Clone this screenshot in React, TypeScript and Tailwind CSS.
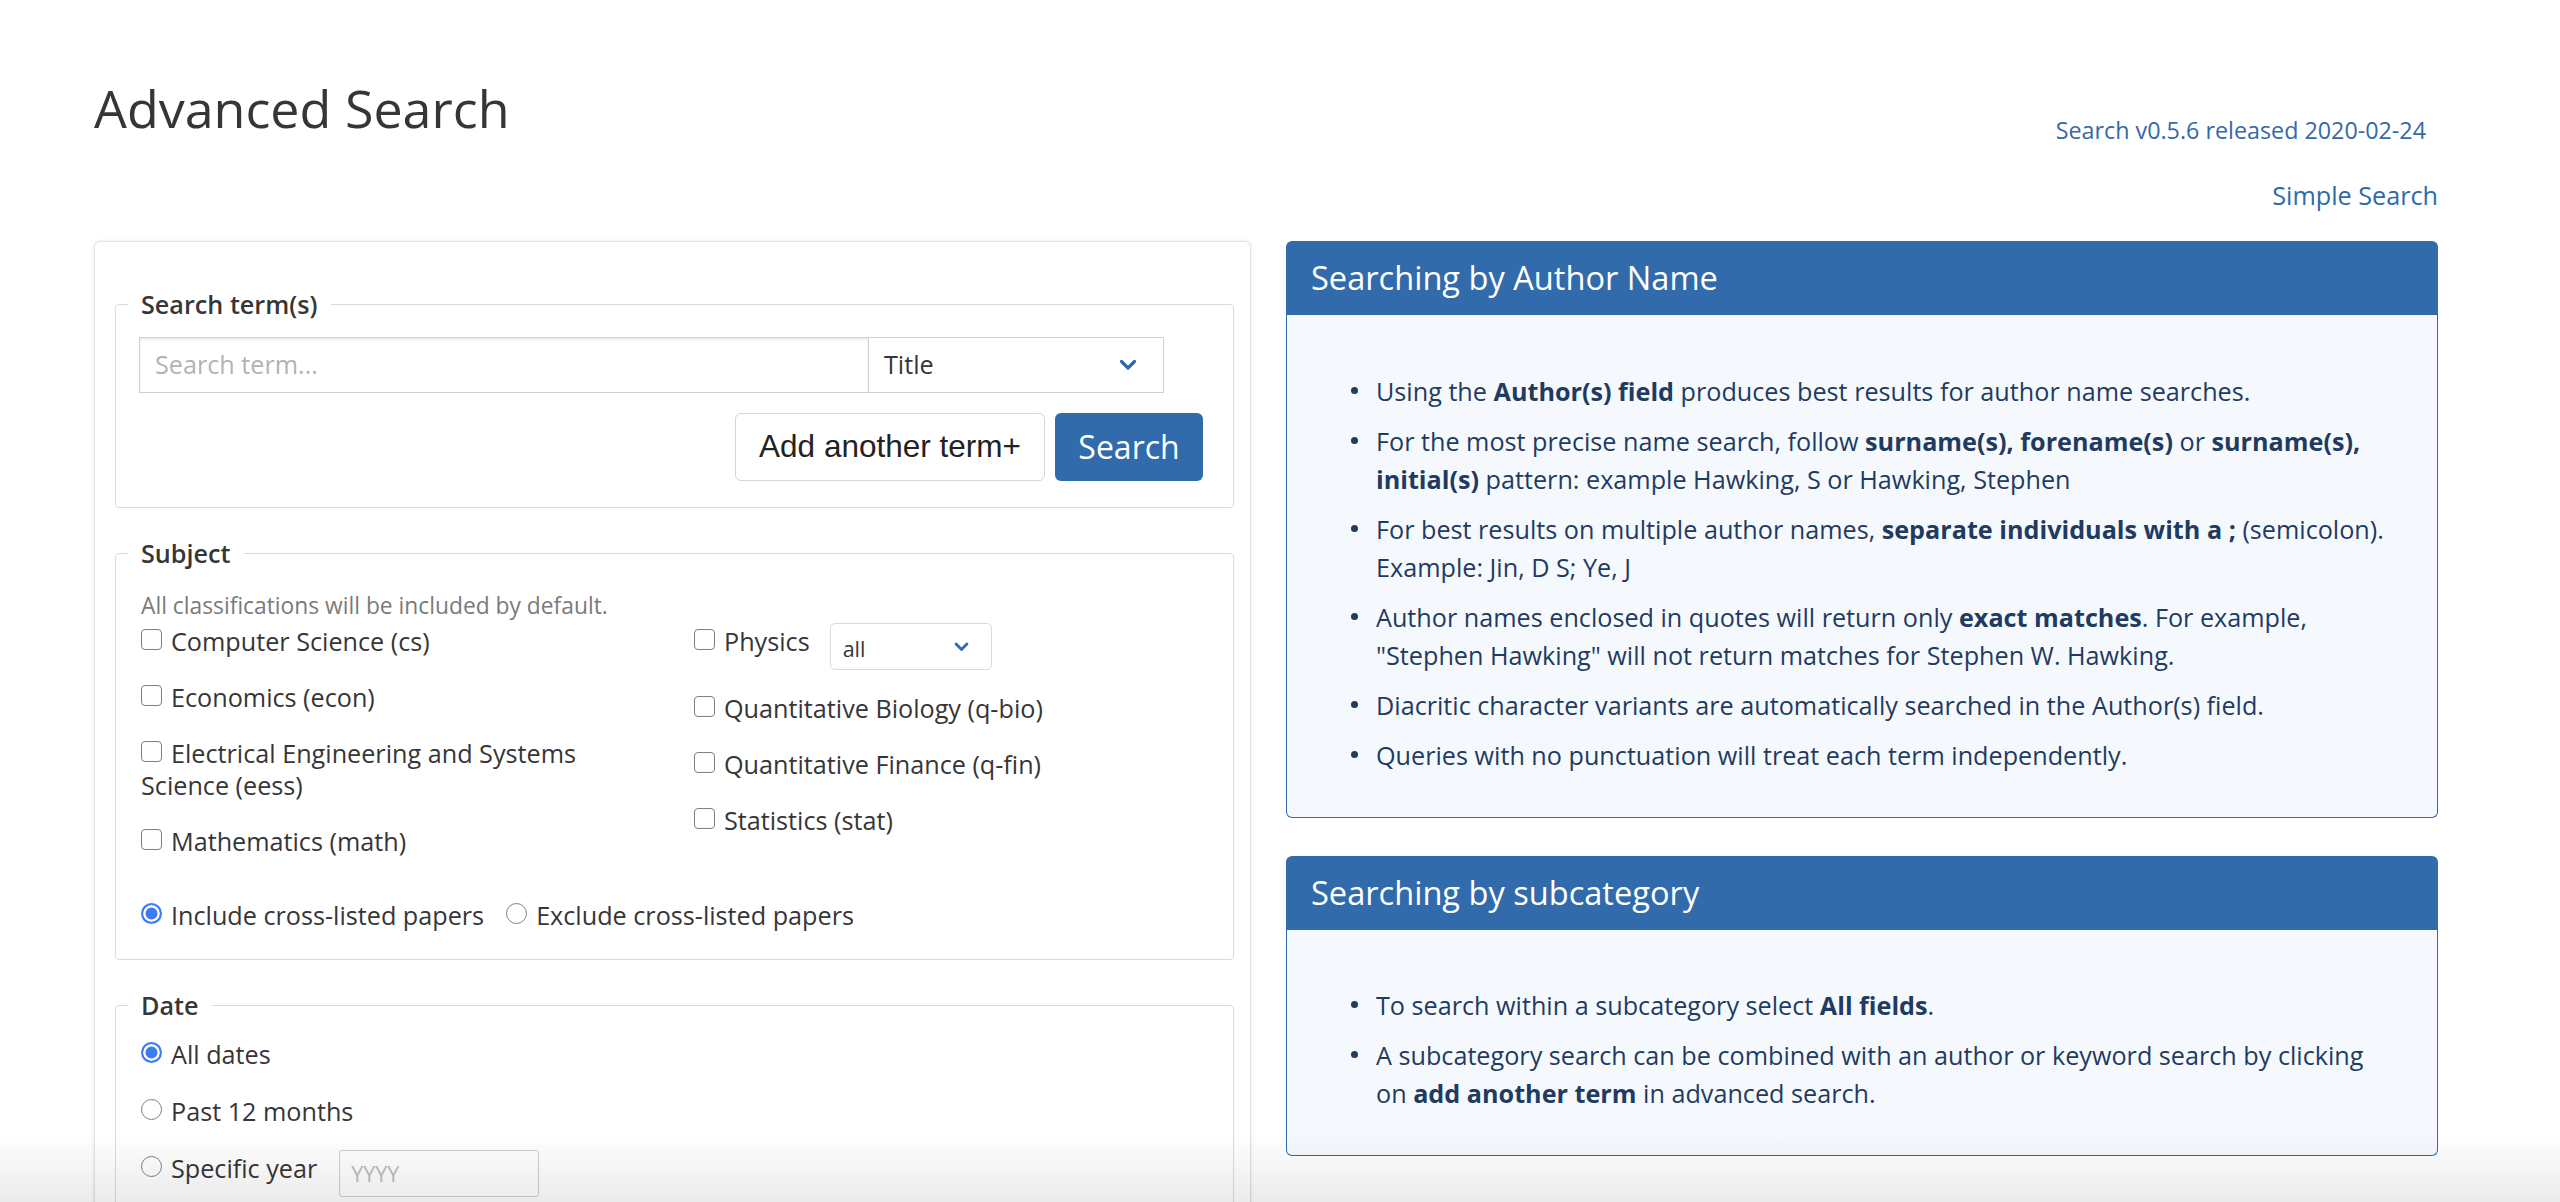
import React from "react";

const Chevron = ({ w = 18, h = 12, sw = 3.2 }: { w?: number; h?: number; sw?: number }) => (
  <svg width={w} height={h} viewBox="0 0 18 12" fill="none">
    <path d="M2.5 2.5 L9 9 L15.5 2.5" stroke="#2f6aab" strokeWidth={sw} strokeLinecap="round" strokeLinejoin="round" />
  </svg>
);

const Box = () => (
  <span className="inline-block align-top mt-[4px] mr-[9px] w-[21px] h-[21px] rounded-[4px] border-[1.5px] border-[#7f7f7f] bg-white" />
);

const Radio = ({ on = false }: { on?: boolean }) =>
  on ? (
    <span className="inline-block shrink-0 mt-[4px] mr-[9px] w-[21px] h-[21px] rounded-full border-[2px] border-[#3b7cf6] bg-[#3b7cf6] shadow-[inset_0_0_0_2.5px_white]" />
  ) : (
    <span className="inline-block shrink-0 mt-[4px] mr-[9px] w-[21px] h-[21px] rounded-full border-[1.5px] border-[#7f7f7f] bg-white" />
  );

const Dot = () => <span className="shrink-0 mt-[15px] mr-[18px] w-[7px] h-[7px] rounded-full bg-[#1f3b5f]" />;

export default function App() {
  return (
    <div className="relative h-[1202px] overflow-hidden bg-white font-['Open_Sans',sans-serif] text-[#363636]">
      <div className="ml-[94px] w-[2344px] pt-[79px]">
        <div className="flex justify-between items-start">
          <h1 className="text-[52px] leading-[58px] font-normal text-[#363636]">Advanced Search</h1>
          <div className="flex flex-col items-end pt-[36px]">
            <span className="mr-[12px] text-[23.3px] leading-[30px] text-[#3569a8]">Search v0.5.6 released 2020-02-24</span>
            <span className="mt-[32px] text-[25.2px] leading-[36px] text-[#2e6aa9]">Simple Search</span>
          </div>
        </div>

        <div className="mt-[28px] flex items-start gap-[35px]">
          {/* Left form card */}
          <div className="w-[1157px] shrink-0 rounded-[6px] border border-[#e3e3e3] shadow-[0_0_3px_rgba(0,0,0,0.12)] pt-[44px] pl-[20px] pr-[16px] pb-[60px]">
            <fieldset className="border border-[#dbdbdb] rounded-[4px] pl-[12px] pr-[30px] pb-[26px]">
              <legend className="px-[13px] text-[25.2px] leading-[36px] font-semibold text-[#363636]">Search term(s)</legend>
              <div className="mt-[15px] pl-[11px] flex w-[1036px] h-[56px]">
                <div className="flex-1 border border-[#cfcfcf] shadow-[inset_0_2px_3px_rgba(0,0,0,0.08)] flex items-center pl-[15px] text-[25.2px] text-[#b3b3b3]">
                  Search term...
                </div>
                <div className="w-[295px] border border-l-0 border-[#cfcfcf] flex items-center justify-between pl-[15px] pr-[26px] text-[25.2px] text-[#363636]">
                  <span>Title</span>
                  <Chevron />
                </div>
              </div>
              <div className="mt-[20px] flex justify-end gap-[10px]">
                <div className="w-[310px] h-[68px] rounded-[6px] border border-[#d5d5d5] bg-white flex items-center justify-center font-['Liberation_Sans',Arial,sans-serif] text-[31.5px] text-[#222]">
                  Add another term+
                </div>
                <div className="w-[148px] h-[68px] rounded-[6px] bg-[#316bab] flex items-center justify-center text-[32px] text-white">
                  Search
                </div>
              </div>
            </fieldset>

            <fieldset className="mt-[27px] border border-[#dbdbdb] rounded-[4px] pl-[12px] pr-[25px] pb-[28px]">
              <legend className="px-[13px] text-[25.2px] leading-[36px] font-semibold text-[#363636]">Subject</legend>
              <div className="pl-[13px]">
                <p className="mt-[21px] text-[22.8px] leading-[28px] text-[#7a7a7a]">All classifications will be included by default.</p>
                <div className="mt-[5px] grid grid-cols-[553px_1fr] text-[25.2px] leading-[32px] text-[#363636]">
                  <div className="flex flex-col gap-[24px]">
                    <label className="block w-[500px]"><Box />Computer Science (cs)</label>
                    <label className="block w-[500px]"><Box />Economics (econ)</label>
                    <label className="block w-[500px]"><Box />Electrical Engineering and Systems Science (eess)</label>
                    <label className="block w-[500px]"><Box />Mathematics (math)</label>
                  </div>
                  <div className="flex flex-col gap-[24px]">
                    <div className="flex items-start mb-[-2px]">
                      <label className="block"><Box />Physics</label>
                      <div className="ml-[20px] mt-[-2px] w-[162px] h-[47px] rounded-[5px] border border-[#dbdbdb] bg-white flex items-center justify-between pl-[12px] pr-[22px] text-[21.5px]">
                        <span className="mt-[4px]">all</span>
                        <Chevron w={15} h={10} sw={3.4} />
                      </div>
                    </div>
                    <label className="block"><Box />Quantitative Biology (q-bio)</label>
                    <label className="block"><Box />Quantitative Finance (q-fin)</label>
                    <label className="block"><Box />Statistics (stat)</label>
                  </div>
                </div>
                <div className="mt-[42px] flex items-start text-[25.2px] leading-[32px]">
                  <Radio on />
                  <span>Include cross-listed papers</span>
                  <span className="ml-[22px]" />
                  <Radio />
                  <span>Exclude cross-listed papers</span>
                </div>
              </div>
            </fieldset>

            <fieldset className="mt-[27px] border border-[#dbdbdb] rounded-[4px] pl-[12px] pr-[25px] pb-[28px]">
              <legend className="px-[13px] text-[25.2px] leading-[36px] font-semibold text-[#363636]">Date</legend>
              <div className="pl-[13px] mt-[15px] flex flex-col gap-[25px] text-[25.2px] leading-[32px]">
                <div className="flex items-start"><Radio on /><span>All dates</span></div>
                <div className="flex items-start"><Radio /><span>Past 12 months</span></div>
                <div className="flex items-start">
                  <Radio />
                  <span>Specific year</span>
                  <div className="ml-[22px] mt-[-2px] w-[200px] h-[47px] rounded-[3px] border border-[#cfcfcf] flex items-center pl-[11px] text-[21.5px] text-[#bdbdbd]">
                    YYYY
                  </div>
                </div>
              </div>
            </fieldset>
          </div>

          {/* Right help panels */}
          <div className="w-[1152px] shrink-0 flex flex-col gap-[38px]">
            <div>
              <div className="h-[74px] rounded-t-[6px] bg-[#316bab] flex items-center pl-[25px] text-[32.6px] text-white">
                Searching by Author Name
              </div>
              <div className="rounded-b-[6px] border border-t-0 border-[#316bab] bg-[#f5f9fe] pt-[57px] pb-[43px] pl-[64px] pr-[30px]">
                <ul className="flex flex-col gap-[12px] text-[25.2px] leading-[38px] text-[#1f3b5f]">
                  <li className="flex"><Dot /><span>Using the <b className="font-bold">Author(s) field</b> produces best results for author name searches.</span></li>
                  <li className="flex"><Dot /><span>For the most precise name search, follow <b className="font-bold">surname(s), forename(s)</b> or <b className="font-bold">surname(s), initial(s)</b> pattern: example Hawking, S or Hawking, Stephen</span></li>
                  <li className="flex"><Dot /><span>For best results on multiple author names, <b className="font-bold">separate individuals with a ;</b> (semicolon). <span className="whitespace-nowrap">Example: Jin,</span> D S; Ye, J</span></li>
                  <li className="flex"><Dot /><span>Author names enclosed in quotes will return only <b className="font-bold">exact matches</b>. For example, <span className="whitespace-nowrap">"Stephen Hawking"</span> will not return matches for Stephen W. Hawking.</span></li>
                  <li className="flex"><Dot /><span>Diacritic character variants are automatically searched in the Author(s) field.</span></li>
                  <li className="flex"><Dot /><span>Queries with no punctuation will treat each term independently.</span></li>
                </ul>
              </div>
            </div>
            <div>
              <div className="h-[74px] rounded-t-[6px] bg-[#316bab] flex items-center pl-[25px] text-[32.6px] text-white">
                Searching by subcategory
              </div>
              <div className="rounded-b-[6px] border border-t-0 border-[#316bab] bg-[#f5f9fe] pt-[56px] pb-[43px] pl-[64px] pr-[30px]">
                <ul className="flex flex-col gap-[12px] text-[25.2px] leading-[38px] text-[#1f3b5f]">
                  <li className="flex"><Dot /><span>To search within a subcategory select <b className="font-bold">All fields</b>.</span></li>
                  <li className="flex"><Dot /><span>A subcategory search can be combined with an author or keyword search by clicking <span className="whitespace-nowrap">on <b className="font-bold">add another</b></span> <b className="font-bold">term</b> in advanced search.</span></li>
                </ul>
              </div>
            </div>
          </div>
        </div>
      </div>
      <div className="pointer-events-none absolute inset-x-0 bottom-0 h-[70px] bg-linear-to-b from-transparent to-black/[0.08]" />
    </div>
  );
}
